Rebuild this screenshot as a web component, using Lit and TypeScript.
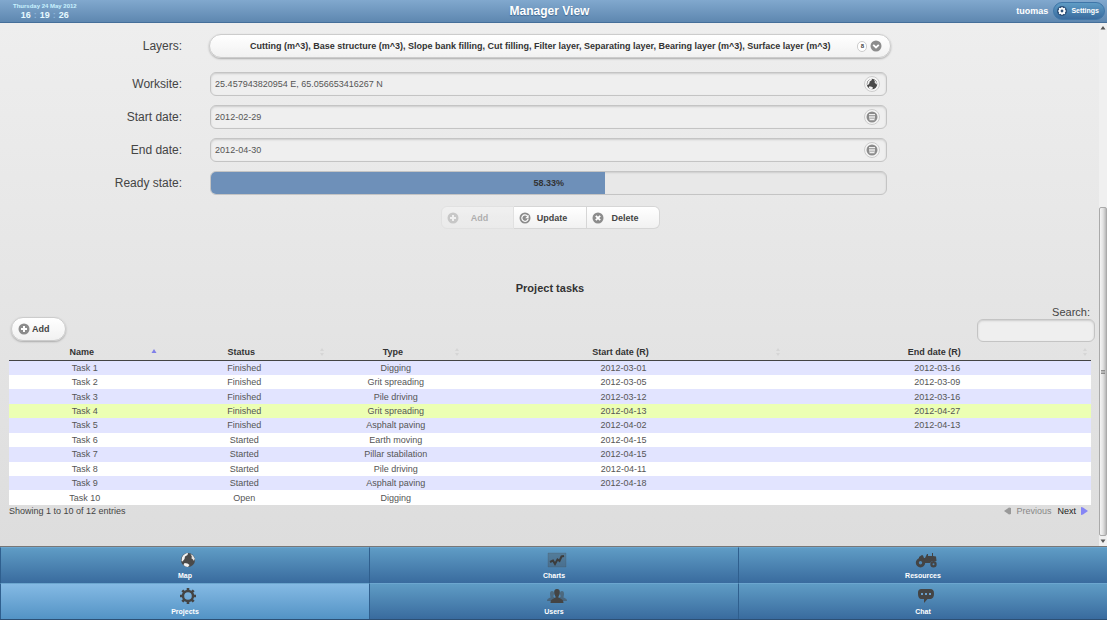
import { LitElement, html, css, svg } from "lit";
import { customElement, state } from "lit/decorators.js";
import { classMap } from "lit/directives/class-map.js";
import { styleMap } from "lit/directives/style-map.js";

interface Task {
  name: string;
  status: string;
  type: string;
  start: string;
  end: string;
  selected?: boolean;
}

const TASKS: Task[] = [
  { name: "Task 1", status: "Finished", type: "Digging", start: "2012-03-01", end: "2012-03-16" },
  { name: "Task 2", status: "Finished", type: "Grit spreading", start: "2012-03-05", end: "2012-03-09" },
  { name: "Task 3", status: "Finished", type: "Pile driving", start: "2012-03-12", end: "2012-03-16" },
  { name: "Task 4", status: "Finished", type: "Grit spreading", start: "2012-04-13", end: "2012-04-27", selected: true },
  { name: "Task 5", status: "Finished", type: "Asphalt paving", start: "2012-04-02", end: "2012-04-13" },
  { name: "Task 6", status: "Started", type: "Earth moving", start: "2012-04-15", end: "" },
  { name: "Task 7", status: "Started", type: "Pillar stabilation", start: "2012-04-15", end: "" },
  { name: "Task 8", status: "Started", type: "Pile driving", start: "2012-04-11", end: "" },
  { name: "Task 9", status: "Started", type: "Asphalt paving", start: "2012-04-18", end: "" },
  { name: "Task 10", status: "Open", type: "Digging", start: "", end: "" },
];

const COLUMNS = ["Name", "Status", "Type", "Start date (R)", "End date (R)"];

const LAYERS =
  "Cutting (m^3), Base structure (m^3), Slope bank filling, Cut filling, Filter layer, Separating layer, Bearing layer (m^3), Surface layer (m^3)";

/* Glyphs that sit on a round grey disc, 12 x 12 */
const GLYPHS: Record<string, unknown> = {
  plus: svg`<path d="M6 3v6M3 6h6" stroke="#fff" stroke-width="2" fill="none"/>`,
  refresh: svg`<path d="M8.6 4.2A3.200 3.200 0 1 0 9.200 6.600" stroke="#fff" stroke-width="1.2" fill="none"/><path d="M9.600 2.800v3.400H6.200z" fill="#fff"/>`,
  remove: svg`<path d="M3.8 3.8l4.4 4.4M8.2 3.8L3.8 8.2" stroke="#fff" stroke-width="1.8" fill="none"/>`,
  down: svg`<path d="M3.2 4.8L6 7.5l2.800-2.700" stroke="#fff" stroke-width="1.8" fill="none"/>`,
  list: svg`<path d="M3 3.500h6M3 5.200h6M3 6.900h6M3.500 8.600h5" stroke="#eee" stroke-width="1.100" fill="none"/>`,
};

const disc = (name: string) => html`
  <svg class="disc" viewBox="0 0 12 12" aria-hidden="true">
    <circle cx="6" cy="6" r="5.500" fill="#8c8c8c"></circle>
    ${GLYPHS[name]}
  </svg>
`;

const globe = html`
  <svg class="globe" viewBox="0 0 16 16" aria-hidden="true">
    <circle cx="8" cy="8" r="7" fill="#4a4a4a"></circle>
    <path d="M2 5.500C3 2.500 6 1 8 1L7.500 3 5 4.500 4.500 7 2.500 9.500 1.500 9z" fill="#f2f2f2"></path>
    <path d="M10.500 2l2.500 1.500 1.800 3L14 9l-1.500-2-1-.5.3-2z" fill="#e4e4e4"></path>
    <path d="M4.500 11l3 .5 2 1.500-1.500 2-2.500-.5L3.500 13z" fill="#f2f2f2"></path>
  </svg>
`;

const NAV = [
  { label: "Map", icon: globe },
  {
    label: "Charts",
    icon: html`<svg class="wide" viewBox="0 0 20 16" aria-hidden="true">
      <path d="M1 1h18v14H1z" fill="#444" fill-opacity=".3" stroke="#444" stroke-opacity=".4" stroke-width=".5"></path>
      <path d="M3 10l3-1.500L8 12l2.500-4.500L12.500 9l2-4.500L17 4" fill="none" stroke="#3c3c3c" stroke-width="2"></path>
    </svg>`,
  },
  {
    label: "Resources",
    icon: html`<svg class="tractor" viewBox="0 0 22 16" aria-hidden="true">
      <path d="M4 5l3-2 1 .5L9 6h1l2-4h1v2h4V1h1v3l3 .5.5 4.500H17l-2 2H9L4 7z" fill="#444"></path>
      <path fill-rule="evenodd" d="M5.500 6a4.700 4.700 0 1 1 0 9.400 4.700 4.700 0 0 1 0-9.400zm0 3a1.700 1.700 0 1 0 0 3.400 1.700 1.700 0 0 0 0-3.400zM18.500 9a3.200 3.200 0 1 1 0 6.400 3.200 3.200 0 0 1 0-6.400zm0 2.200a1 1 0 1 0 0 2 1 1 0 0 0 0-2z" fill="#444"></path>
    </svg>`,
  },
  {
    label: "Projects",
    active: true,
    icon: html`<svg viewBox="0 0 16 16" aria-hidden="true">
      <circle cx="8" cy="8" r="5" fill="none" stroke="#444" stroke-width="2.400"></circle>
      <path d="M8 0v3M8 13v3M0 8h3M13 8h3M2.300 2.300l2.200 2.200M11.500 11.500l2.200 2.200M13.700 2.300l-2.200 2.200M4.500 11.500l-2.200 2.200" stroke="#444" stroke-width="2.600"></path>
    </svg>`,
  },
  {
    label: "Users",
    icon: html`<svg class="wide" viewBox="0 0 20 16" aria-hidden="true">
      <path d="M5 3c1.500 0 2.200 1 2 3l-.7 2.500L8 10v3H0c0-2 1-2.500 3.500-3.500L3 6c0-2 .6-3 2-3zM15 3c-1.500 0-2.200 1-2 3l.7 2.500L12 10v3h8c0-2-1-2.500-3.500-3.500L17 6c0-2-.6-3-2-3z" fill="#444" fill-opacity=".5"></path>
      <path d="M10 1c2.300 0 3 1.600 2.800 4-.1 1.800-.8 2.600-1.300 3.500v1.200c2.500 1 5 1.600 5 5.300h-13c0-3.700 2.500-4.300 5-5.300V8.500C8 7.600 7.300 6.800 7.200 5 7 2.600 7.700 1 10 1z" fill="#444"></path>
    </svg>`,
  },
  {
    label: "Chat",
    icon: html`<svg viewBox="0 0 16 16" aria-hidden="true">
      <path d="M4 1h8c3 0 4 1.500 4 4.500S15 11 12 11H9.500L6 15v-4H4c-3 0-4-2-4-5.500S1 1 4 1z" fill="#444"></path>
      <path d="M3 5h2v2H3zM7 5h2v2H7zM11 5h2v2h-2z" fill="#6aa0cc"></path>
    </svg>`,
  },
];

@customElement("app-root")
export class AppRoot extends LitElement {
  @state() private ready = 58.33;
  @state() private query = "";

  static styles = css`
    :host {
      display: flex;
      flex-direction: column;
      height: 100vh;
      overflow: hidden;
      font-family: "Liberation Sans", Arial, sans-serif;
      font-size: 9px;
      line-height: 14px;
      color: #444;
    }
    * { box-sizing: border-box; }
    button, input, select { font: inherit; color: inherit; margin: 0; }
    svg { display: block; flex: none; width: 16px; height: 16px; }
    .disc { width: 12px; height: 12px; }

    .topbar {
      flex: none;
      display: grid;
      grid-template-columns: 1fr auto 1fr;
      align-items: center;
      height: 23px;
      padding-right: 8px;
      color: #fff;
      background: linear-gradient(#81a8ce, #5e87b0);
      border-bottom: 1px solid #456f9a;
    }
    .clock { justify-self: start; margin-left: 13px; text-align: center; font-weight: bold; color: #c8f2ff; }
    .date { font-size: 6px; line-height: 7px; }
    .time { display: flex; justify-content: center; gap: 3px; font-size: 9px; line-height: 10px; color: #e6faff; }
    .colon { color: #8fb6da; }
    .title { margin: 0; font-size: 12px; line-height: 16px; text-shadow: 0 1px 1px #3e6790; }
    .account { justify-self: end; display: flex; align-items: center; gap: 5px; margin-right: -6px; font-weight: bold; }
    .settings {
      display: flex;
      align-items: center;
      gap: 4px;
      height: 18px;
      padding: 0 5px 0 3px;
      font-size: 7px;
      color: #fff;
      border: 1px solid #3f76a8;
      border-radius: 9px;
      background: linear-gradient(#5f9cc5, #396b9e);
    }
    .settings svg { width: 10px; height: 10px; }

    .body { flex: 1; min-height: 0; display: flex; background: linear-gradient(#eee, #ddd); }
    .content { flex: 1; min-width: 0; overflow: hidden; padding: 11px 8px 0 9px; }

    .form { display: grid; gap: 9px; }
    .row { display: grid; grid-template-columns: 16% 62.6%; column-gap: 28px; align-items: center; }
    .row.layers { margin-bottom: 5px; }
    .row label, .caption { text-align: right; font-size: 12px; }
    .field {
      display: flex;
      align-items: center;
      height: 24px;
      padding: 0 6px 0 3px;
      border: 1px solid #c4c4c4;
      border-radius: 6px;
      background: #efefef;
      box-shadow: inset 0 1px 2px #ccc;
      overflow: hidden;
    }
    .field input { flex: 1; min-width: 0; padding: 0 1px; border: 0; outline: 0; background: none; color: #555; }
    .round {
      display: grid;
      place-items: center;
      width: 16px;
      height: 16px;
      padding: 0;
      border: 1px solid #ccc;
      border-radius: 50%;
      background: #f6f6f6;
    }
    .round svg { width: 12px; height: 12px; }
    .picker { position: relative; margin: 0 -4px 0 -1px; }
    .picker select {
      display: block;
      width: 100%;
      height: 24px;
      padding: 0 56px 0 36px;
      appearance: none;
      text-align: center;
      text-align-last: center;
      font-weight: bold;
      color: #333;
      border: 1px solid #ccc;
      border-radius: 12px;
      background: linear-gradient(#fff, #f1f1f1);
      box-shadow: 0 1px 2px #aaa;
    }
    .marks { position: absolute; inset: 0 9px 0 auto; display: flex; align-items: center; gap: 3px; pointer-events: none; }
    .count {
      width: 10px;
      font-size: 6px;
      line-height: 9px;
      text-align: center;
      font-weight: bold;
      border: 1px solid #ccc;
      border-radius: 5px;
      background: #fff;
    }
    .progress { position: relative; padding: 0; background: #e8e8e8; }
    .fill { height: 100%; background: #6e90b9; }
    .percent { position: absolute; inset: 0; display: grid; place-items: center; font-weight: bold; color: #333; }

    .actions { display: flex; justify-content: center; margin-top: 11px; }
    .actions button {
      display: flex;
      align-items: center;
      width: 73px;
      height: 23px;
      padding: 0 12px 0 5px;
      font-weight: bold;
      border: 1px solid #d6d6d6;
      border-left-width: 0;
      background: linear-gradient(#fff, #f1f1f1);
    }
    .actions button:first-child { border-left-width: 1px; border-radius: 6px 0 0 6px; }
    .actions button:last-child { border-radius: 0 6px 6px 0; }
    .actions button:disabled { opacity: .35; }
    .actions span { flex: 1; text-align: center; }

    .heading { margin: 52px 0 0; text-align: center; font-size: 11px; line-height: 14px; color: #333; }
    .tools { display: flex; justify-content: space-between; align-items: flex-end; margin-top: 10px; }
    .add {
      display: flex;
      align-items: center;
      gap: 2px;
      height: 24px;
      margin: 0 0 1px 2px;
      padding: 0 15px 0 6px;
      font-weight: bold;
      border: 1px solid #ccc;
      border-radius: 12px;
      background: linear-gradient(#fff, #f1f1f1);
      box-shadow: 0 1px 2px #aaa;
    }
    .search { display: grid; margin-right: -4px; font-size: 11px; text-align: right; }
    .search label { padding-right: 5px; }
    .search .field { width: 118px; height: 23px; }

    table { width: 100%; height: 163px; table-layout: fixed; border-collapse: collapse; text-align: center; color: #555; }
    th, td { padding: 0; }
    thead tr { height: 18px; }
    th { border-bottom: 1px solid #444; color: #333; }
    th:nth-child(1) { width: 14%; }
    th:nth-child(2) { width: 15.5%; }
    th:nth-child(3) { width: 12.5%; }
    th:nth-child(4) { width: 29.6%; }
    .sort { display: flex; align-items: center; width: 100%; padding: 3px 3px 0; border: 0; background: none; font-weight: bold; }
    .sort span { flex: 1; }
    .sort svg { width: 6px; height: 10px; }
    tbody tr { background: #fff; }
    tbody tr:nth-child(odd) { background: #e2e4ff; }
    tbody tr.selected { background: #ecffb3; }
    td { line-height: 14px; }

    .summary { display: flex; justify-content: space-between; line-height: 12px; }
    .pager { display: flex; gap: 6px; padding-right: 3px; }
    .pager button { display: flex; align-items: center; gap: 5px; padding: 0; border: 0; background: none; color: #222; }
    .pager button:disabled { color: #888; }
    .pager svg { width: 7px; height: 8px; }

    .scroll {
      flex: none;
      display: flex;
      flex-direction: column;
      align-items: center;
      width: 8px;
      padding: 3px 0;
      background: #f0f0f0;
    }
    .scroll svg { width: 6px; height: 4px; }
    .track { flex: 1; width: 100%; display: flex; flex-direction: column; justify-content: flex-end; margin-bottom: 3px; }
    .thumb {
      display: grid;
      place-items: center;
      height: 65%;
      border: 1px solid #aaa;
      border-radius: 2px;
      background: linear-gradient(90deg, #f5f5f5, #e2e2e2 50%, #b8b8b8);
    }

    .nav {
      flex: none;
      display: grid;
      grid-template-columns: repeat(3, 1fr);
      border-top: 1px solid #777;
      border-bottom: 1px solid #2c4f74;
    }
    .nav a {
      display: flex;
      flex-direction: column;
      align-items: center;
      height: 36px;
      padding-top: 4px;
      gap: 3px;
      font-size: 7px;
      line-height: 10px;
      font-weight: bold;
      text-decoration: none;
      color: #fff;
      border-left: 1px solid #2f5f8e;
      border-top: 1px solid #6ca6cf;
      background: linear-gradient(#5f9cc5, #396b9e);
    }
    .nav a.active { background: linear-gradient(#85bae4, #5393c5); }
    .nav svg { margin-left: 5px; }
    .nav .wide { width: 20px; }
    .nav .tractor { width: 22px; }
  `;

  private sortMark(active: boolean) {
    return active
      ? html`<svg viewBox="0 0 6 10" aria-hidden="true"><path d="M3 2l2.500 4h-5z" fill="#7f7fe8"></path></svg>`
      : html`<svg viewBox="0 0 6 10" aria-hidden="true"><path d="M3 1l2 3H1zM3 9l2-3H1z" fill="#d6d6d6"></path></svg>`;
  }

  private row(id: string, label: string, value: string, action: string, icon: unknown) {
    return html`
      <div class="row">
        <label for=${id}>${label}</label>
        <div class="field">
          <input id=${id} type="text" .value=${value} />
          <button class="round" type="button" aria-label=${action}>${icon}</button>
        </div>
      </div>
    `;
  }

  render() {
    return html`
      <header class="topbar">
        <div class="clock">
          <div class="date">Thursday 24 May 2012</div>
          <div class="time">
            <span>16</span><span class="colon">:</span><span>19</span><span class="colon">:</span><span>26</span>
          </div>
        </div>
        <h1 class="title">Manager View</h1>
        <div class="account">
          <span>tuomas</span>
          <button class="settings" type="button">
            <svg viewBox="0 0 12 12" aria-hidden="true">
              <circle cx="6" cy="6" r="6" fill="#2d5078"></circle>
              <circle cx="6" cy="6" r="2.800" fill="none" stroke="#fff" stroke-width="2.200"></circle>
              <path d="M6 1.200v1.500M6 9.300v1.500M1.200 6h1.500M9.300 6h1.500M2.600 2.600l1 1M8.400 8.400l1 1M9.400 2.600l-1 1M3.600 8.400l-1 1" stroke="#fff" stroke-width="1.400"></path>
            </svg>
            Settings
          </button>
        </div>
      </header>

      <div class="body">
        <main class="content">
          <form class="form">
            <div class="row layers">
              <label for="layers">Layers:</label>
              <div class="picker">
                <select id="layers"><option>${LAYERS}</option></select>
                <div class="marks"><span class="count">8</span>${disc("down")}</div>
              </div>
            </div>
            ${this.row("worksite", "Worksite:", "25.457943820954 E, 65.056653416267 N", "Pick on map", globe)}
            ${this.row("start", "Start date:", "2012-02-29", "Pick start date", disc("list"))}
            ${this.row("end", "End date:", "2012-04-30", "Pick end date", disc("list"))}
            <div class="row">
              <span class="caption" id="ready">Ready state:</span>
              <div class="field progress" role="progressbar" aria-labelledby="ready" aria-valuenow=${this.ready}>
                <div class="fill" style=${styleMap({ width: `${this.ready}%` })}></div>
                <span class="percent">${this.ready}%</span>
              </div>
            </div>
          </form>

          <div class="actions">
            <button type="button" disabled>${disc("plus")}<span>Add</span></button>
            <button type="button">${disc("refresh")}<span>Update</span></button>
            <button type="button">${disc("remove")}<span>Delete</span></button>
          </div>

          <h2 class="heading">Project tasks</h2>

          <div class="tools">
            <button class="add" type="button">${disc("plus")}Add</button>
            <div class="search">
              <label for="search">Search:</label>
              <div class="field">
                <input
                  id="search"
                  type="text"
                  .value=${this.query}
                  @input=${(e: Event) => (this.query = (e.target as HTMLInputElement).value)}
                />
              </div>
            </div>
          </div>

          <table>
            <thead>
              <tr>
                ${COLUMNS.map(
                  (name, i) => html`<th><button class="sort" type="button"><span>${name}</span>${this.sortMark(i === 0)}</button></th>`
                )}
              </tr>
            </thead>
            <tbody>
              ${TASKS.filter((t) => t.name.toLowerCase().includes(this.query.toLowerCase())).map(
                (t) => html`
                  <tr class=${classMap({ selected: !!t.selected })}>
                    <td>${t.name}</td>
                    <td>${t.status}</td>
                    <td>${t.type}</td>
                    <td>${t.start}</td>
                    <td>${t.end}</td>
                  </tr>
                `
              )}
            </tbody>
          </table>

          <div class="summary">
            <span>Showing 1 to 10 of 12 entries</span>
            <div class="pager">
              <button type="button" disabled>
                <svg viewBox="0 0 7 8" aria-hidden="true"><path d="M0 4l5-3.500L7 1v6l-2 .5z" fill="#999"></path></svg>Previous
              </button>
              <button type="button">
                Next<svg viewBox="0 0 7 8" aria-hidden="true"><path d="M7 4L2 .5 0 0v8l2-.5z" fill="#8585f5"></path></svg>
              </button>
            </div>
          </div>
        </main>

        <div class="scroll" aria-hidden="true">
          <svg viewBox="0 0 6 4"><path d="M3 0l2.500 3.500h-5z" fill="#555"></path></svg>
          <div class="track">
            <div class="thumb">
              <svg viewBox="0 0 6 4"><path d="M1 .5h4M1 2h4M1 3.500h4" stroke="#777" stroke-width=".8"></path></svg>
            </div>
          </div>
          <svg viewBox="0 0 6 4"><path d="M3 4L.5.500h5z" fill="#555"></path></svg>
        </div>
      </div>

      <nav class="nav">
        ${NAV.map(
          (item) => html`<a href="#${item.label.toLowerCase()}" class=${classMap({ active: !!item.active })}>${item.icon}<span>${item.label}</span></a>`
        )}
      </nav>
    `;
  }
}
